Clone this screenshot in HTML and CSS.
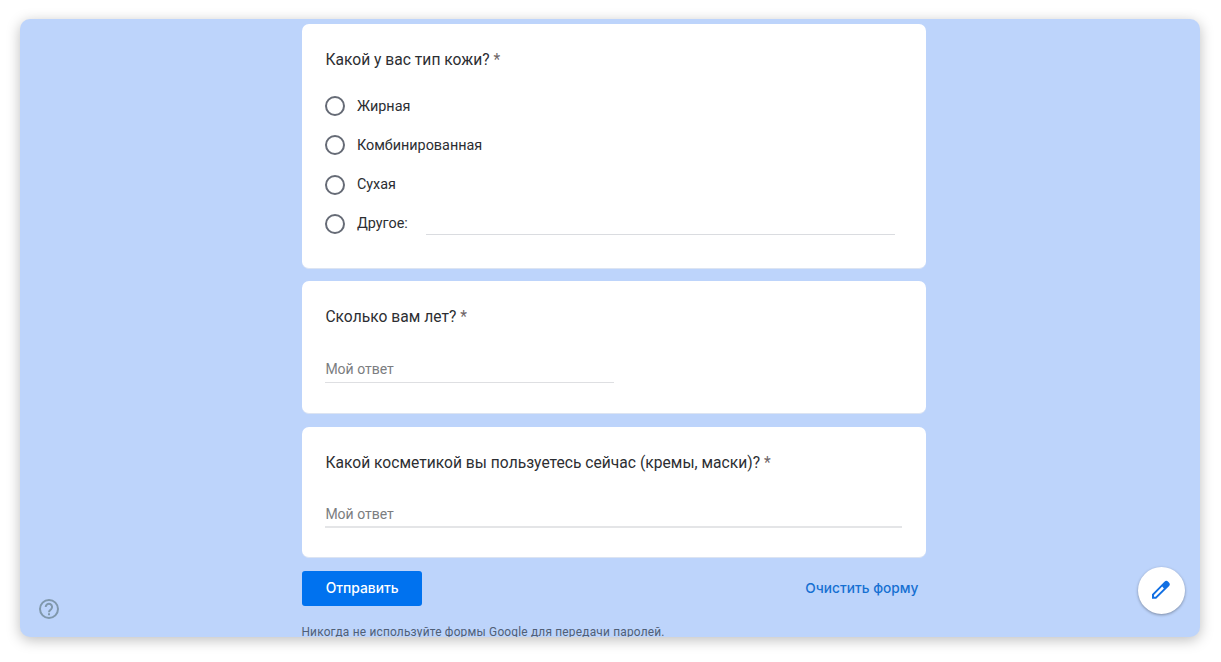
FILE: index.html
```html
<!DOCTYPE html>
<html lang="ru">
<head>
    <meta charset="UTF-8">
    <meta name="viewport" content="width=device-width, initial-scale=1.0">
    <title>Анкета</title>
    <link rel="stylesheet" href="styles.css">
</head>
<body>
    <div class="window">
        <form class="form">
            <section class="card card-options">
                <h2 class="question">Какой у вас тип кожи? <span class="required">*</span></h2>
                <div class="options">
                    <label class="option"><span class="radio"></span><span class="option-text">Жирная</span></label>
                    <label class="option"><span class="radio"></span><span class="option-text">Комбинированная</span></label>
                    <label class="option"><span class="radio"></span><span class="option-text">Сухая</span></label>
                    <label class="option"><span class="radio"></span><span class="option-text">Другое:</span><span class="other-line"></span></label>
                </div>
            </section>

            <section class="card card-age">
                <h2 class="question">Сколько вам лет? <span class="required">*</span></h2>
                <div class="answer answer-short">Мой ответ</div>
            </section>

            <section class="card card-cosmetics">
                <h2 class="question">Какой косметикой вы пользуетесь сейчас (кремы, маски)? <span class="required">*</span></h2>
                <div class="answer answer-full">Мой ответ</div>
            </section>

            <div class="actions">
                <button type="button" class="submit">Отправить</button>
                <a class="clear">Очистить форму</a>
            </div>

            <p class="note">Никогда не используйте формы Google для передачи паролей.</p>
        </form>

        <!-- Floating buttons -->
        <a class="help">
            <svg width="22" height="22" viewBox="0 0 22 22" fill="none" stroke="#8098ac" stroke-width="2">
                <circle cx="11" cy="11" r="9"/>
                <path d="M7.7 9a3.2 3.2 0 1 1 5.4 2.3c-1.3 1.1-2.1 1.5-2.1 2.9"/>
                <path d="M11 15.2v2"/>
            </svg>
        </a>
        <a class="edit">
            <svg width="20" height="20" viewBox="0 0 20 20">
                <path fill="#1270e3" fill-rule="evenodd" d="M13.4 1.7a2.7 2.7 0 0 1 3.8 0l.7.7a2.7 2.7 0 0 1 0 3.8L5.2 18.7H1V14.3zM11.2 6.6L3 14.9V16.8H4.5L12.9 8.4z"/>
            </svg>
        </a>
    </div>
</body>
</html>
```
FILE: styles.css
```css
* {
    margin: 0;
    padding: 0;
    box-sizing: border-box;
}

body {
    background-color: #ffffff;
    padding: 19px 21px 25px 20px;
    height: 662px;
    overflow: hidden;
    font-family: Roboto, "Liberation Sans", sans-serif;
    color: #2c2e32;
}

.window {
    position: relative;
    height: 618px;
    padding: 5px 0 0 282.4px;
    background-color: #bdd4fb;
    border-radius: 10px;
    box-shadow: 0 3px 14px rgba(0, 0, 0, 0.26);
    overflow: hidden;
}

.form {
    width: 624px;
}

/* Question cards */
.card {
    background-color: #ffffff;
    border-bottom: 1px solid #dce4f2;
    border-radius: 7px;
    padding: 24px 24px 0 23px;
    margin-bottom: 13px;
}

.card-options {
    height: 244.5px;
    margin-bottom: 12.5px;
}

.card-age {
    height: 133px;
}

.card-cosmetics {
    height: 131px;
}

.question {
    font-size: 15.6px;
    font-weight: 400;
    line-height: 24px;
    letter-spacing: 0.02px;
    white-space: nowrap;
}

.required {
    color: #6f6668;
}

.options {
    display: flex;
    flex-direction: column;
    gap: 15.3px;
    margin-top: 22px;
}

.option {
    display: flex;
    align-items: center;
    height: 24px;
    font-size: 14.4px;
}

.radio {
    width: 20px;
    height: 20px;
    border: 2px solid #666b76;
    border-radius: 50%;
    margin-right: 11.5px;
}

.other-line {
    align-self: flex-end;
    width: 469px;
    height: 1px;
    margin: 0 0 1px 18px;
    background-color: #dadce0;
}

.answer {
    height: 26px;
    line-height: 24px;
    font-size: 14px;
    color: #7b7d80;
    border-bottom: 1px solid #dedfe2;
}

.answer-short {
    width: 289px;
    margin-top: 28px;
}

.answer-full {
    height: 27px;
    line-height: 26px;
    margin-top: 26px;
    border-bottom-width: 2px;
    border-bottom-color: #e4e5e7;
}

/* Bottom of the form */
.actions {
    display: flex;
    justify-content: space-between;
    align-items: center;
    height: 35px;
    padding-right: 8px;
}

.submit {
    width: 119.5px;
    height: 35px;
    padding-bottom: 2px;
    border: none;
    border-radius: 3px;
    background-color: #0072ef;
    color: #ffffff;
    font-family: Inter, Roboto, sans-serif;
    font-size: 13.8px;
    font-weight: 500;
}

.clear {
    padding-bottom: 2px;
    color: #1670d2;
    font-family: Inter, Roboto, sans-serif;
    font-size: 13.7px;
    font-weight: 500;
}

.note {
    margin: 17px 0 0 -1px;
    font-size: 11.9px;
    line-height: 18px;
    letter-spacing: 0.2px;
    color: #505f76;
    white-space: nowrap;
}

/* Floating buttons */
.help {
    position: absolute;
    left: 18px;
    bottom: 17px;
    width: 22px;
    height: 22px;
}

.help svg {
    display: block;
}

.edit {
    position: absolute;
    right: 15px;
    bottom: 23px;
    display: flex;
    align-items: center;
    justify-content: center;
    width: 47px;
    height: 47px;
    padding: 0 1px 1px 0;
    border-radius: 50%;
    background-color: #ffffff;
    box-shadow: 0 1px 3px rgba(0, 0, 0, 0.35);
}
```
